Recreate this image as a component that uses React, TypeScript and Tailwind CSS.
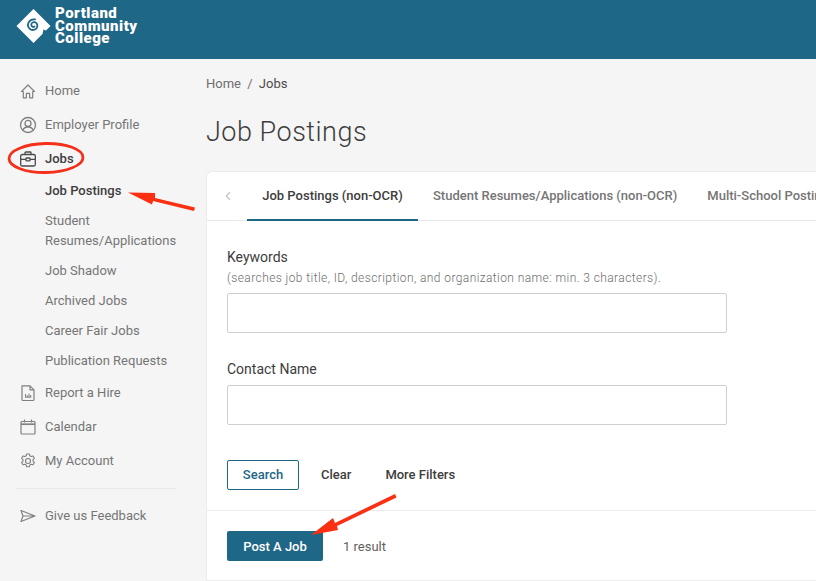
import { ChevronLeft } from "lucide-react";
import type { ReactNode } from "react";

const iconClass = "w-[18px] h-[18px] shrink-0 text-[#808080]";

function HomeIcon() {
  return (
    <svg viewBox="0 0 18 18" fill="none" stroke="currentColor" strokeWidth="1.2" strokeLinejoin="round" className={iconClass}>
      <path d="M2.500 9.500 9 3 15.500 9.500H13.700V15.800H10.600V11.300H7.400V15.800H4.300V9.500H2.500Z" />
    </svg>
  );
}

function ProfileIcon() {
  return (
    <svg viewBox="0 0 18 18" fill="none" stroke="currentColor" strokeWidth="1.300" className={iconClass}>
      <circle cx="9" cy="9" r="7.500" />
      <circle cx="9" cy="7.400" r="3" />
      <path d="M3.900 14.400c.6-2.400 2.600-3.400 5.100-3.400s4.500 1 5.100 3.400" />
    </svg>
  );
}

function BriefcaseIcon() {
  return (
    <svg viewBox="0 0 18 18" fill="none" stroke="#4a4a4a" strokeWidth="1.300" strokeLinejoin="round" className="h-[18px] w-[18px] shrink-0">
      <rect x="1.700" y="4.500" width="14.600" height="11.500" rx="1.500" />
      <path d="M6 4.500V2.800c0-.5.4-.8.8-.8h4.400c.4 0 .8.3.8.8v1.700M1.700 9.300h5.300M11 9.300h5.300" />
      <rect x="7" y="8" width="4" height="2.800" rx=".6" />
    </svg>
  );
}

function ReportIcon() {
  return (
    <svg viewBox="0 0 18 18" fill="none" stroke="currentColor" strokeWidth="1.200" strokeLinejoin="round" className={iconClass}>
      <path d="M3 1.800H11L15 5.800V15.500c0 .6-.4 1-1 1H4c-.6 0-1-.4-1-1V1.800Z" />
      <path d="M11 1.800V5.800H15" />
      <path d="M6.500 13V10M8.300 13V11.300M10 13V9.500M11.700 13V11M6 13.200h6.200" strokeWidth="1" />
    </svg>
  );
}

function CalendarIcon() {
  return (
    <svg viewBox="0 0 18 18" fill="none" stroke="currentColor" strokeWidth="1.200" className={iconClass}>
      <rect x="2" y="3.500" width="14" height="12.500" rx=".8" />
      <path d="M2 6.200H16" strokeWidth="1.700" />
      <path d="M5.500 1.600V4.500M12.500 1.600V4.500" />
    </svg>
  );
}

function GearIcon() {
  return (
    <svg viewBox="0 0 18 18" fill="none" stroke="currentColor" strokeWidth="1.100" strokeLinejoin="round" className={iconClass}>
      <circle cx="9" cy="9" r="2.500" />
      <path d="M7.600 2h2.800l.4 1.800 1.400.8 1.800-.6 1.400 2.400-1.400 1.200v1.600l1.400 1.200-1.400 2.400-1.800-.6-1.400.8-.4 1.800H7.600l-.4-1.800-1.400-.8-1.800.6-1.400-2.400 1.400-1.200V7.600L2.600 6.400 4 4l1.800.6 1.400-.8.4-1.800Z" />
    </svg>
  );
}

function SendIcon() {
  return (
    <svg viewBox="0 0 18 18" fill="none" stroke="currentColor" strokeWidth="1.200" strokeLinejoin="round" className={iconClass}>
      <path d="M2 3.500 16 9 2 14.500 4 9 2 3.500ZM4 9H16" />
    </svg>
  );
}

function Logo() {
  return (
    <svg viewBox="0 0 36 36" className="h-[36px] w-[36px] shrink-0">
      <path d="M17.500 1 34.500 18 30 22.500 27.500 21.500 26.500 26 17.500 35 .5 18Z" fill="#fff" />
      <path
        d="M18.500 18.500c-1.400.9-3.200 0-3.200-1.800s1.800-2.900 3.500-2.500c2.200.6 3 3.100 2.300 5-.9 2.400-3.800 3.400-6.200 2.400-2.700-1.200-3.600-4.500-2.400-7 1.200-2.500 4-3.600 6.600-3.200"
        fill="none"
        stroke="#1f6787"
        strokeWidth="1.800"
        strokeLinecap="round"
      />
    </svg>
  );
}

function NavItem({ icon, children, dark }: { icon: ReactNode; children: ReactNode; dark?: boolean }) {
  return (
    <div className={`flex h-[34px] items-center gap-[8px] pl-[19px] ${dark ? "font-medium text-[#3d3d3d]" : "text-[#757575]"}`}>
      {icon}
      <span>{children}</span>
    </div>
  );
}

function SubItem({ children, active }: { children: ReactNode; active?: boolean }) {
  return (
    <div className={`py-[5px] pl-[45px] pr-2 leading-[20px] ${active ? "font-medium text-[#3d3d3d]" : "text-[#757575]"}`}>
      {children}
    </div>
  );
}

function Field({ label, hint }: { label: string; hint?: string }) {
  return (
    <div>
      <div className="text-[14px] leading-[20px] text-[#3d3d3d]">{label}</div>
      {hint && <div className="mt-px text-[12px] font-light leading-[20px] tracking-[0.41px] text-[#6e6e6e]">{hint}</div>}
      <input className={`block h-[40px] w-[500px] rounded-[2px] border border-[#cfcfcf] bg-white ${hint ? "mt-[5px]" : "mt-[6px]"}`} />
    </div>
  );
}

export default function App() {
  return (
    <div className="relative h-[581px] w-[816px] overflow-hidden bg-[#f5f5f5] font-['Roboto',sans-serif]">
      <header className="flex h-[59px] items-start gap-[3px] bg-[#1f6787] pl-[16px] pt-[8px]">
        <Logo />
        <div className="-mt-px text-[15px] font-black leading-[12.500px] tracking-[0.5px] text-white">
          Portland
          <br />
          Community
          <br />
          College
        </div>
      </header>

      <div className="flex">
        <aside className="w-[206px] shrink-0 pt-[15px] text-[13px]">
          <NavItem icon={<HomeIcon />}>Home</NavItem>
          <NavItem icon={<ProfileIcon />}>Employer Profile</NavItem>
          <NavItem icon={<BriefcaseIcon />} dark>
            Jobs
          </NavItem>
          <div>
            <SubItem active>Job Postings</SubItem>
            <SubItem>
              Student
              <br />
              Resumes/Applications
            </SubItem>
            <SubItem>Job Shadow</SubItem>
            <SubItem>Archived Jobs</SubItem>
            <SubItem>Career Fair Jobs</SubItem>
            <SubItem>Publication Requests</SubItem>
          </div>
          <NavItem icon={<ReportIcon />}>Report a Hire</NavItem>
          <NavItem icon={<CalendarIcon />}>Calendar</NavItem>
          <NavItem icon={<GearIcon />}>My Account</NavItem>
          <div className="mb-[10px] ml-[16px] mr-[30px] mt-[10px] border-t border-[#e8e8e8]" />
          <NavItem icon={<SendIcon />}>Give us Feedback</NavItem>
        </aside>

        <main className="min-w-0 flex-1">
          <div className="pt-[15px] text-[13px] leading-[20px] text-[#6e6e6e]">
            Home <span className="mx-[3px]">/</span> <span className="text-[#4a4a4a]">Jobs</span>
          </div>
          <h1 className="mt-[18px] text-[27px] font-light leading-[40px] tracking-[0.5px] text-[#3d3d3d]">Job Postings</h1>
          <section className="mt-[19px] w-[640px] rounded-tl-[6px] border-b border-l border-t border-[#ececec] bg-white">
            <div className="flex h-[49px] items-stretch border-b border-[#e8e8e8] text-[13px] font-medium">
              <div className="flex w-[40px] items-center pl-[14px] text-[#c4c4c4]">
                <ChevronLeft size={14} />
              </div>
              <div className="-mb-px flex w-[171px] items-center justify-center border-b-2 border-[#1f6787] text-[#3d3d3d]">
                Job Postings (non-OCR)
              </div>
              <div className="flex items-center whitespace-nowrap pl-[15px] text-[#757575]">Student Resumes/Applications (non-OCR)</div>
              <div className="flex min-w-0 items-center overflow-hidden whitespace-nowrap pl-[30px] text-[#757575]">Multi-School Postings</div>
            </div>

            <div className="px-[20px] pt-[26px]">
              <Field label="Keywords" hint="(searches job title, ID, description, and organization name: min. 3 characters)." />
              <div className="mt-[26px]">
                <Field label="Contact Name" />
              </div>
              <div className="mt-[35px] flex h-[30px] items-center text-[13px] font-medium">
                <button className="h-[30px] w-[72px] rounded-[2px] border border-[#1f6787] text-[#1f6787]">Search</button>
                <span className="ml-[22px] text-[#3d3d3d]">Clear</span>
                <span className="ml-[34px] text-[#3d3d3d]">More Filters</span>
              </div>
            </div>

            <div className="mt-[20px] flex items-center border-t border-[#ececec] px-[20px] pb-[19px] pt-[20px]">
              <button className="h-[30px] w-[96px] rounded-[2px] bg-[#1f6787] pt-px text-[13px] font-medium text-white">Post A Job</button>
              <span className="ml-[20px] pt-px text-[13px] text-[#5f5f5f]">1 result</span>
            </div>
          </section>
        </main>
      </div>

      {/* red annotations drawn over the screenshot */}
      <svg viewBox="0 0 816 581" className="pointer-events-none absolute inset-0 h-[581px] w-[816px]">
        <ellipse cx="46" cy="158" rx="37" ry="14.500" fill="none" stroke="#f5301a" strokeWidth="2.800" transform="rotate(-1 46 158)" />
        <path d="M128 192.500 155 193 155 198 195 207.500 194 211 153 201 152 204.500Z" fill="#fb2f12" />
        <path d="M311 535 333 518 335 523 395 494 396.500 497.500 337 526 338 530Z" fill="#fb2f12" />
      </svg>
    </div>
  );
}
